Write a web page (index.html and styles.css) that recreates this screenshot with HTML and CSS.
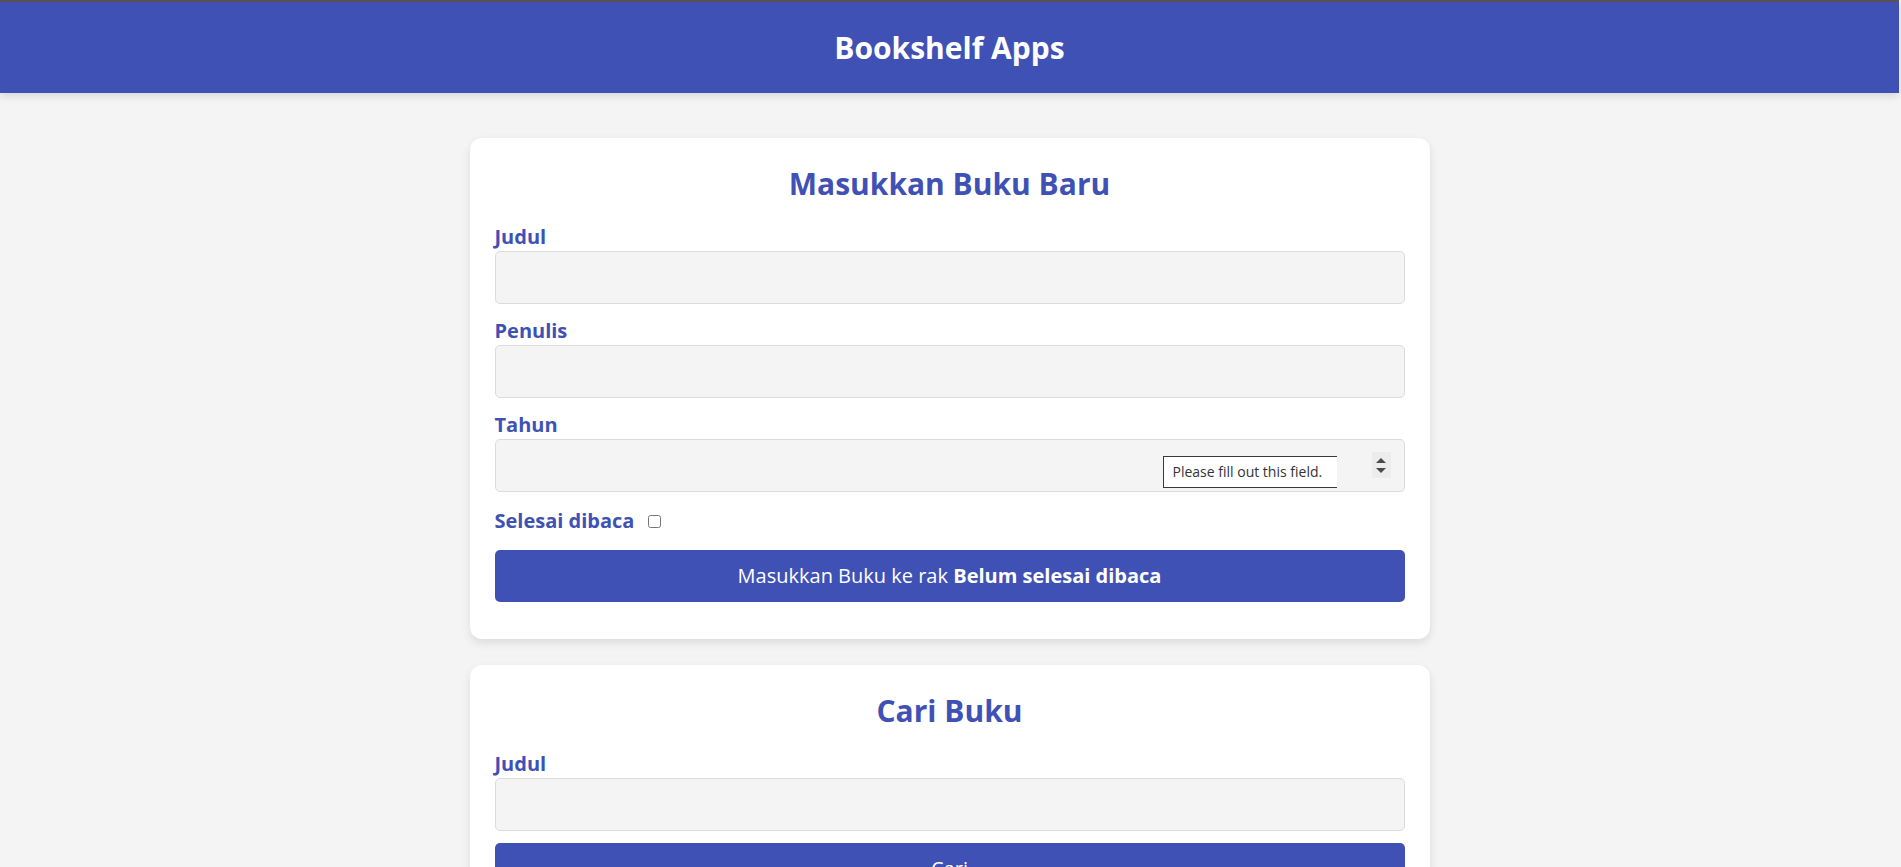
FILE: index.html
```html
<!DOCTYPE html>
<html lang="id">
<head>
<meta charset="utf-8">
<title>Bookshelf Apps</title>
<link rel="stylesheet" href="styles.css">
</head>
<body>
<header class="head-bar">
  <h1 class="head-title">Bookshelf Apps</h1>
</header>
<main class="main">
  <section class="card">
    <h2 class="card-title">Masukkan Buku Baru</h2>
    <form class="book-form">
      <div class="field">
        <label class="field-label" for="inputBookTitle">Judul</label>
        <input class="field-input" id="inputBookTitle" type="text">
      </div>
      <div class="field">
        <label class="field-label" for="inputBookAuthor">Penulis</label>
        <input class="field-input" id="inputBookAuthor" type="text">
      </div>
      <div class="field">
        <label class="field-label" for="inputBookYear">Tahun</label>
        <div class="input-wrap">
          <input class="field-input" id="inputBookYear" type="text">
          <span class="tooltip">Please fill out this field.</span>
          <span class="spinner"><span class="spin-up"></span><span class="spin-down"></span></span>
        </div>
      </div>
      <div class="field-inline">
        <label class="field-label inline" for="inputBookIsComplete">Selesai dibaca</label>
        <input class="check" id="inputBookIsComplete" type="checkbox">
      </div>
      <button class="btn" type="button">Masukkan Buku ke rak <span class="btn-strong">Belum selesai dibaca</span></button>
    </form>
  </section>
  <section class="card">
    <h2 class="card-title">Cari Buku</h2>
    <form class="book-form">
      <div class="field tight">
        <label class="field-label" for="searchBookTitle">Judul</label>
        <input class="field-input" id="searchBookTitle" type="text">
      </div>
      <button class="btn" type="button">Cari</button>
    </form>
  </section>
</main>
</body>
</html>
```

FILE: styles.css
```css
* { box-sizing: border-box; }
html, body { margin: 0; padding: 0; }
body {
  background: #f4f4f4;
  font-family: "Open Sans", "Noto Sans", sans-serif;
  font-size: 16px;
  color: #222;
  padding-right: 2px;
}
.head-bar {
  background: #3f51b5;
  border-top: 2px solid #5a5058;
  height: 93px;
  display: flex;
  align-items: center;
  justify-content: center;
  box-shadow: 0 3px 8px rgba(0,0,0,0.12);
}
.head-title {
  margin: 0;
  color: #fff;
  font-size: 30px;
  font-weight: 700;
  line-height: 40px;
}
.main {
  width: 960px;
  margin: 45px auto 0;
  display: flex;
  flex-direction: column;
  gap: 26px;
}
.card {
  background: #fff;
  border-radius: 12px;
  box-shadow: 0 4px 10px rgba(0,0,0,0.1);
  padding: 23px 25px 37px;
}
.card-title {
  margin: 0 0 18px;
  text-align: center;
  color: #3f51b5;
  font-size: 30px;
  font-weight: 700;
  line-height: 45px;
}
.book-form { display: flex; flex-direction: column; }
.field { display: flex; flex-direction: column; margin-bottom: 14px; }
.field.tight { margin-bottom: 12px; }
.field-label {
  color: #3f51b5;
  font-size: 20px;
  font-weight: 700;
  line-height: 26px;
  margin-bottom: 1px;
}
.field-input {
  width: 100%;
  height: 53px;
  background: #f4f4f4;
  border: 1px solid #dcdcdc;
  border-radius: 5px;
  font-family: inherit;
  font-size: 16px;
  padding: 0 12px;
}
.input-wrap { position: relative; }
.tooltip {
  position: absolute;
  left: 668px;
  top: 17px;
  width: 174px;
  height: 32px;
  background: #fff;
  border: 1px solid #3a3a3a;
  border-right: none;
  font-family: "Open Sans", sans-serif;
  font-size: 14px;
  color: #333;
  line-height: 30px;
  padding-left: 9px;
  white-space: nowrap;
  overflow: hidden;
}
.spinner {
  position: absolute;
  right: 14px;
  top: 13px;
  width: 19px;
  height: 26px;
  background: #ececec;
  display: flex;
  flex-direction: column;
  align-items: center;
  justify-content: center;
  gap: 5px;
}
.spin-up, .spin-down {
  width: 0; height: 0;
  border-left: 5px solid transparent;
  border-right: 5px solid transparent;
}
.spin-up { border-bottom: 5px solid #4a4a4a; }
.spin-down { border-top: 5px solid #4a4a4a; }
.field-inline {
  display: flex;
  align-items: center;
  margin: 2px 0 16px;
}
.field-label.inline { margin: 0 10px 0 0; }
.check { width: 13px; height: 13px; margin: 3px 3px 3px 4px; }
.btn {
  width: 100%;
  height: 52px;
  background: #3f51b5;
  color: #fff;
  border: none;
  border-radius: 5px;
  font-family: inherit;
  font-size: 20px;
  line-height: 26px;
  cursor: pointer;
}
.btn-strong { font-weight: 700; }
```
